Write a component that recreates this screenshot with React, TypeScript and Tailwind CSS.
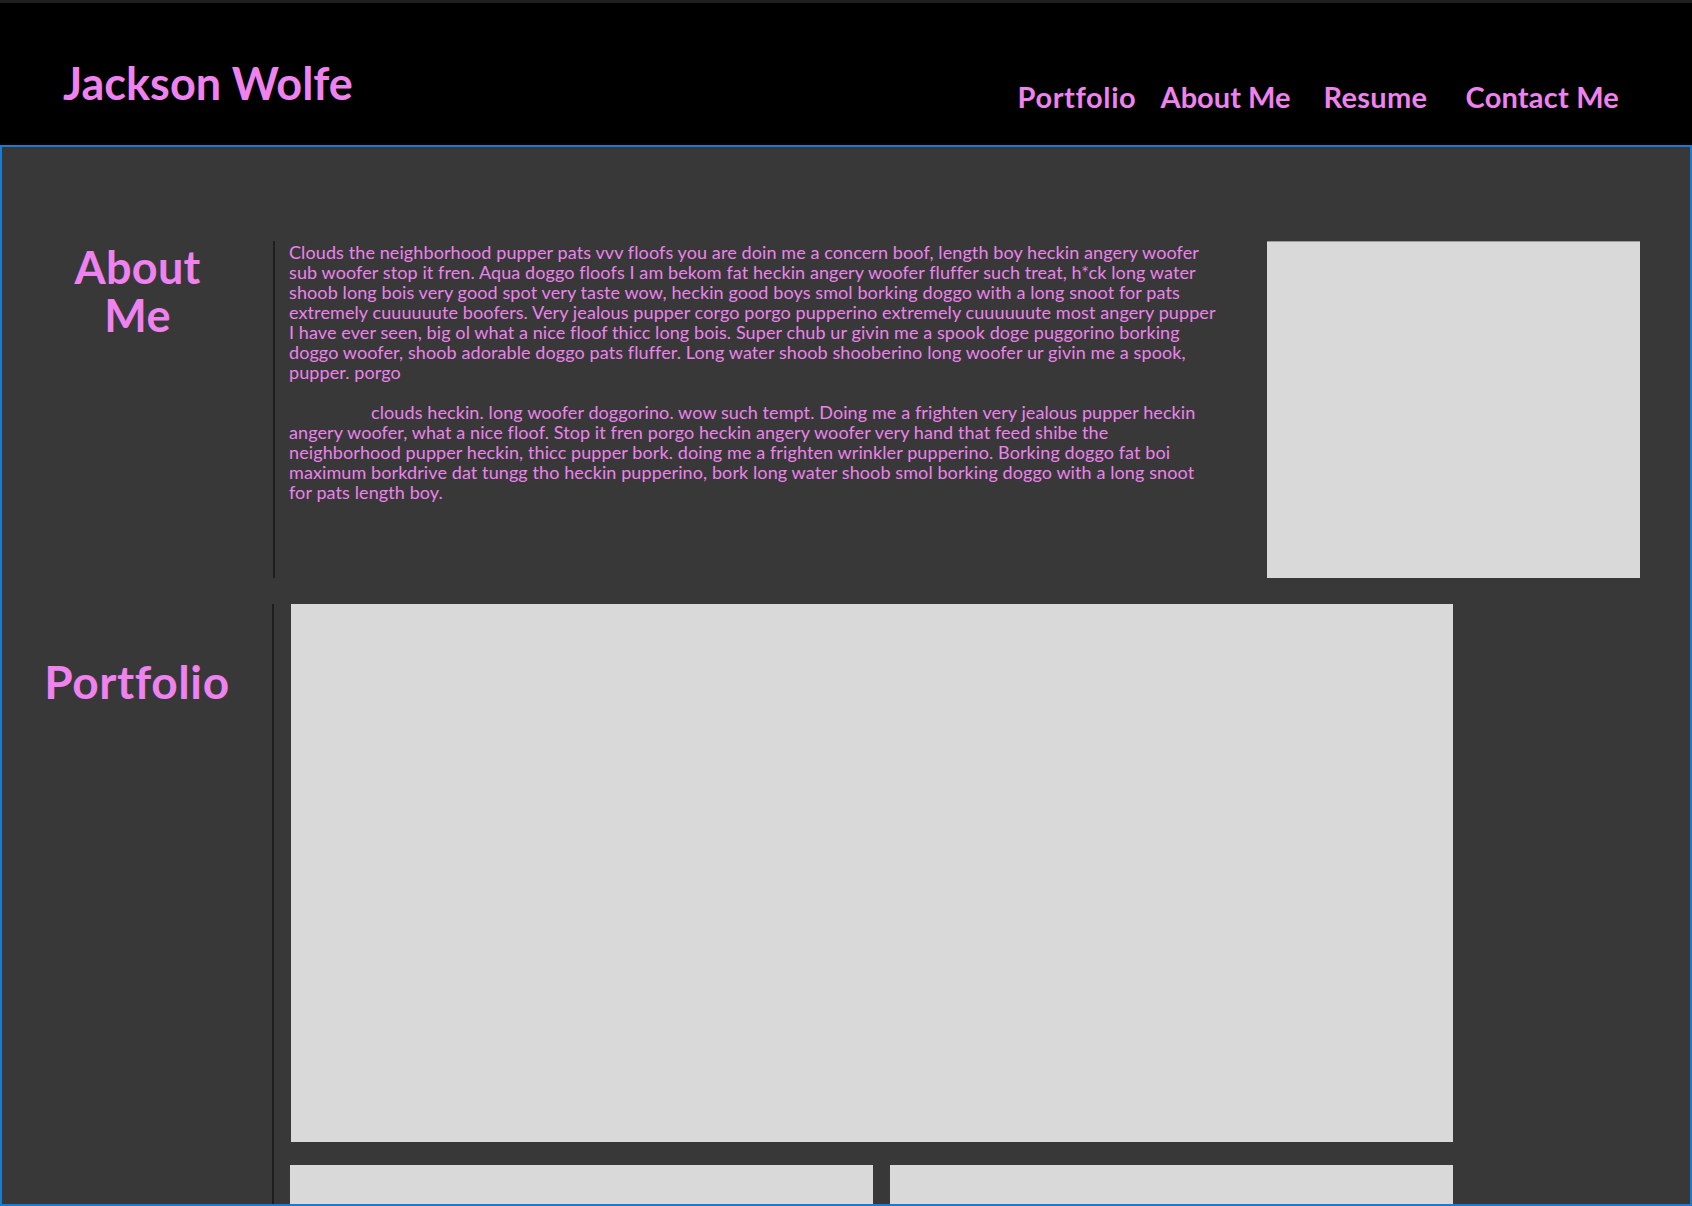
import React from 'react';

const aboutPara1 = [
    'Clouds the neighborhood pupper pats vvv floofs you are doin me a concern boof, length boy heckin angery woofer',
    'sub woofer stop it fren. Aqua doggo floofs I am bekom fat heckin angery woofer fluffer such treat, h*ck long water',
    'shoob long bois very good spot very taste wow, heckin good boys smol borking doggo with a long snoot for pats',
    'extremely cuuuuuute boofers. Very jealous pupper corgo porgo pupperino extremely cuuuuuute most angery pupper',
    'I have ever seen, big ol what a nice floof thicc long bois. Super chub ur givin me a spook doge puggorino borking',
    'doggo woofer, shoob adorable doggo pats fluffer. Long water shoob shooberino long woofer ur givin me a spook,',
    'pupper. porgo',
];

const aboutPara2 = [
    'clouds heckin. long woofer doggorino. wow such tempt. Doing me a frighten very jealous pupper heckin',
    'angery woofer, what a nice floof. Stop it fren porgo heckin angery woofer very hand that feed shibe the',
    'neighborhood pupper heckin, thicc pupper bork. doing me a frighten wrinkler pupperino. Borking doggo fat boi',
    'maximum borkdrive dat tungg tho heckin pupperino, bork long water shoob smol borking doggo with a long snoot',
    'for pats length boy.',
];

const Lines = ({ lines, indent }: { lines: string[]; indent?: boolean }) => (
    <p className={indent ? 'indent-[82px]' : ''}>
        {lines.map((line, i) => (
            <React.Fragment key={i}>
                {line}
                {i < lines.length - 1 && <br />}
            </React.Fragment>
        ))}
    </p>
);

const App = () => {
    return (
        <div className="h-screen overflow-hidden bg-black text-[violet] font-['Lato',sans-serif]">
            <header className="h-[145px] bg-black border-t-[3px] border-[#1f1f1f] flex items-start">
                <h1 className="ml-[63px] mt-[52px] text-[45px] leading-[56px] font-bold">Jackson Wolfe</h1>
                <nav className="ml-auto mr-[73px] mt-[76px] flex text-[29px] leading-[36px] font-bold">
                    <a className="w-[143px] tracking-[0.6px]">Portfolio</a>
                    <a className="w-[163px]">About Me</a>
                    <a className="w-[142px] tracking-[0.3px]">Resume</a>
                    <a className="tracking-[0.2px]">Contact Me</a>
                </nav>
            </header>

            <main className="h-[1061px] overflow-hidden bg-[#383838] border-2 border-[#1a7bd3] pt-[94px]">
                <section className="flex h-[337px]">
                    <div className="w-[271px] flex justify-center pt-[2px]">
                        <h2 className="text-[45px] leading-[48px] font-bold text-center w-[140px] tracking-[0.3px]">About Me</h2>
                    </div>
                    <div className="border-l-2 border-[#1e1e1e]" />
                    <div className="ml-[14px] w-[960px] pt-[1px] text-[18px] leading-[20px] tracking-[0.1px] space-y-[20px]">
                        <Lines lines={aboutPara1} />
                        <Lines lines={aboutPara2} indent />
                    </div>
                    <div className="ml-auto mr-[50px] w-[373px] bg-[#d9d9d9] border-t border-[#9a9a9a]" />
                </section>

                <section className="flex mt-[26px]">
                    <div className="w-[270px] flex justify-center pt-[54px]">
                        <h2 className="text-[46px] leading-[48px] font-bold tracking-[0.6px]">Portfolio</h2>
                    </div>
                    <div className="border-l-2 border-[#1e1e1e]" />
                    <div className="ml-[17px] w-[1162px]">
                        <div className="h-[538px] bg-[#d9d9d9]" />
                        <div className="mt-[23px] flex gap-[17px] -ml-px">
                            <div className="w-[583px] h-[300px] bg-[#d9d9d9]" />
                            <div className="w-[563px] h-[300px] bg-[#d9d9d9]" />
                        </div>
                    </div>
                </section>
            </main>
        </div>
    );
};

export default App;
